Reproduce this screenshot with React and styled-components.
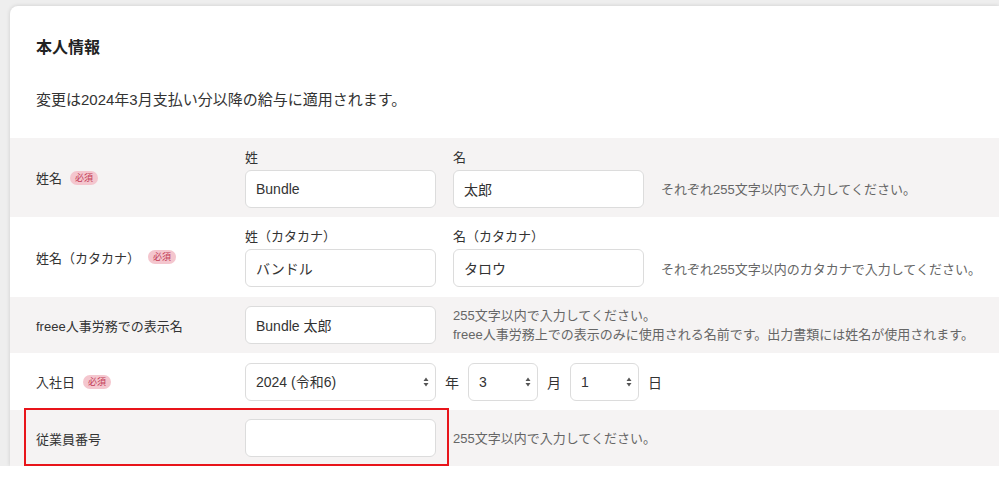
import React from 'react'
import styled, { createGlobalStyle } from 'styled-components'

const GlobalStyle = createGlobalStyle`
  html, body {
    margin: 0;
    padding: 0;
    background: #fff;
  }
  body {
    font-family: "Liberation Sans", "Noto Sans CJK JP", sans-serif;
    color: #333;
  }
  * { box-sizing: border-box; }
`

const Page = styled.div`
  height: 466px;
  background: #eeeeee;
  padding: 6px 0 0 10px;
`

const Card = styled.div`
  height: 460px;
  background: #fff;
  border-radius: 8px 0 0 0;
  box-shadow: 0 0 4px rgba(0, 0, 0, 0.14);
`

const Header = styled.div`
  height: 132px;
  padding: 32px 26px 0;
`

const Title = styled.h2`
  margin: 0;
  font-size: 16px;
  line-height: 20px;
  font-weight: 700;
  color: #222;
`

const Desc = styled.p`
  margin: 33px 0 0;
  font-size: 15px;
  line-height: 18px;
  color: #333;
`

const Row = styled.div`
  position: relative;
  display: flex;
  align-items: center;
  min-height: ${({ $h }) => $h}px;
  padding: 0 0 0 26px;
  background: ${({ $shade }) => ($shade ? '#f5f3f3' : '#fff')};
`

const LabelCell = styled.div`
  width: 209px;
  flex-shrink: 0;
  display: flex;
  align-items: center;
  gap: 8px;
  font-size: 13px;
  color: #333;
`

const Required = styled.span`
  display: inline-flex;
  align-items: center;
  justify-content: center;
  height: 14px;
  padding: 0 5px;
  border-radius: 7px;
  background: #f4c6ce;
  color: #c23a55;
  font-size: 9px;
  line-height: 14px;
`

const Fields = styled.div`
  display: flex;
  align-items: ${({ $align }) => $align || 'center'};
  gap: ${({ $gap }) => $gap || 17}px;
`

const Field = styled.div`
  display: flex;
  flex-direction: column;
  gap: 2px;
`

const SubLabel = styled.div`
  font-size: 13px;
  line-height: 20px;
  color: #333;
`

const Input = styled.input`
  width: 191px;
  height: 38px;
  padding: 0 10px;
  border: 1px solid #dcdcdc;
  border-radius: 6px;
  background: #fff;
  font-family: inherit;
  font-size: 14px;
  color: #333;
  outline: none;
`

const Help = styled.div`
  font-size: 13px;
  line-height: 19px;
  color: #666;
  padding-bottom: ${({ $pb }) => $pb || 0}px;
`

const SelectWrap = styled.div`
  position: relative;
  width: ${({ $w }) => $w}px;
  height: 38px;
`

const Select = styled.select`
  appearance: none;
  -webkit-appearance: none;
  width: 100%;
  height: 100%;
  padding: 0 20px 0 10px;
  border: 1px solid #dcdcdc;
  border-radius: 6px;
  background: #fff;
  font-family: inherit;
  font-size: 14px;
  color: #333;
  outline: none;
`

const Arrow = styled.svg`
  position: absolute;
  right: 7px;
  top: 14px;
  pointer-events: none;
`

const Unit = styled.span`
  font-size: 14px;
  color: #333;
`

const Highlight = styled.div`
  position: absolute;
  z-index: 2;
  left: 14px;
  top: -2px;
  width: 425px;
  height: 58px;
  border: 2px solid #e8141a;
  pointer-events: none;
`

const Picker = ({ width, value }) => (
  <SelectWrap $w={width}>
    <Select defaultValue={value}>
      <option>{value}</option>
    </Select>
    <Arrow width="6" height="10" viewBox="0 0 6 10">
      <path d="M3 0.5 L5.5 4 H0.5 Z M3 9.5 L5.5 6 H0.5 Z" fill="#555" />
    </Arrow>
  </SelectWrap>
)

export default function App() {
  return (
    <>
      <GlobalStyle />
      <Page>
        <Card>
          <Header>
            <Title>本人情報</Title>
            <Desc>変更は2024年3月支払い分以降の給与に適用されます。</Desc>
          </Header>

          <Row $shade $h={79}>
            <LabelCell>
              姓名<Required>必須</Required>
            </LabelCell>
            <Fields $align="flex-end">
              <Field>
                <SubLabel>姓</SubLabel>
                <Input defaultValue="Bundle" />
              </Field>
              <Field>
                <SubLabel>名</SubLabel>
                <Input defaultValue="太郎" />
              </Field>
              <Help $pb={9}>それぞれ255文字以内で入力してください。</Help>
            </Fields>
          </Row>

          <Row $h={80}>
            <LabelCell>
              姓名（カタカナ）<Required>必須</Required>
            </LabelCell>
            <Fields $align="flex-end">
              <Field>
                <SubLabel>姓（カタカナ）</SubLabel>
                <Input defaultValue="バンドル" />
              </Field>
              <Field>
                <SubLabel>名（カタカナ）</SubLabel>
                <Input defaultValue="タロウ" />
              </Field>
              <Help $pb={8}>それぞれ255文字以内のカタカナで入力してください。</Help>
            </Fields>
          </Row>

          <Row $shade $h={56}>
            <LabelCell>freee人事労務での表示名</LabelCell>
            <Fields>
              <Input defaultValue="Bundle 太郎" />
              <Help>
                255文字以内で入力してください。
                <br />
                freee人事労務上での表示のみに使用される名前です。出力書類には姓名が使用されます。
              </Help>
            </Fields>
          </Row>

          <Row $h={57}>
            <LabelCell>
              入社日<Required>必須</Required>
            </LabelCell>
            <Fields $gap={9}>
              <Picker width={191} value="2024 (令和6)" />
              <Unit>年</Unit>
              <Picker width={70} value="3" />
              <Unit>月</Unit>
              <Picker width={69} value="1" />
              <Unit>日</Unit>
            </Fields>
          </Row>

          <Row $shade $h={56}>
            <LabelCell>従業員番号</LabelCell>
            <Fields>
              <Input defaultValue="" />
              <Help>255文字以内で入力してください。</Help>
            </Fields>
            <Highlight />
          </Row>
        </Card>
      </Page>
    </>
  )
}
